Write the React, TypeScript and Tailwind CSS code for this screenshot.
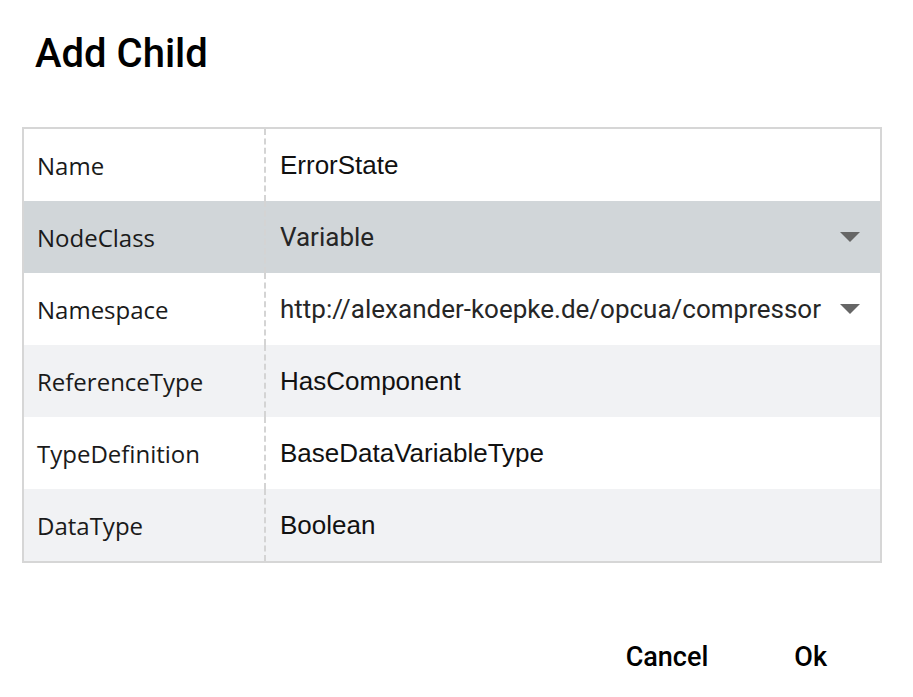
import { ReactNode } from "react";

interface RowProps {
  label: string;
  value: ReactNode;
  bg: string;
  dropdown?: boolean;
  roboto?: boolean;
}

const Caret = () => (
  <svg width="20" height="10" viewBox="0 0 20 10" className="shrink-0">
    <path d="M0 0 L20 0 L10 10 Z" fill="#666666" />
  </svg>
);

const Row = ({ label, value, bg, dropdown, roboto }: RowProps) => (
  <div className={`flex h-[72px] ${bg}`}>
    <div className="w-[242px] shrink-0 flex items-center pl-[13px] pt-[2px] border-r-2 border-dashed border-[#d4d4d4] text-[24px] text-[#1a1a1a] font-['Open_Sans',sans-serif]">
      {label}
    </div>
    <div
      className={`flex-1 flex items-center pl-[14px] pr-[20px] ${
        roboto
          ? "font-['Roboto',sans-serif] text-[26px] text-[#262626]"
          : "font-['Liberation_Sans',sans-serif] text-[26px] text-[#111]"
      }`}
    >
      <span className="flex-1 truncate">{value}</span>
      {dropdown && <Caret />}
    </div>
  </div>
);

export default function App() {
  return (
    <div className="w-[913px] h-[697px] bg-white relative">
      <h1 className="pl-[35px] pt-[28px] text-[40px] leading-[52px] font-medium text-black font-['Roboto',sans-serif]">
        Add Child
      </h1>
      <div className="mt-[47px] ml-[22px] w-[860px] border-2 border-[#d6d6d6]">
        <Row label="Name" value="ErrorState" bg="bg-white" />
        <Row label="NodeClass" value="Variable" bg="bg-[#d1d6d9]" dropdown roboto />
        <Row
          label="Namespace"
          value="http://alexander-koepke.de/opcua/compressor"
          bg="bg-white"
          dropdown
          roboto
        />
        <Row label="ReferenceType" value="HasComponent" bg="bg-[#f1f2f4]" />
        <Row label="TypeDefinition" value="BaseDataVariableType" bg="bg-white" />
        <Row label="DataType" value="Boolean" bg="bg-[#f1f2f4]" />
      </div>
      <div className="flex justify-end gap-[86px] pr-[86px] mt-[74px] font-['Roboto',sans-serif] font-medium text-[27px] text-black">
        <button>Cancel</button>
        <button>Ok</button>
      </div>
    </div>
  );
}
